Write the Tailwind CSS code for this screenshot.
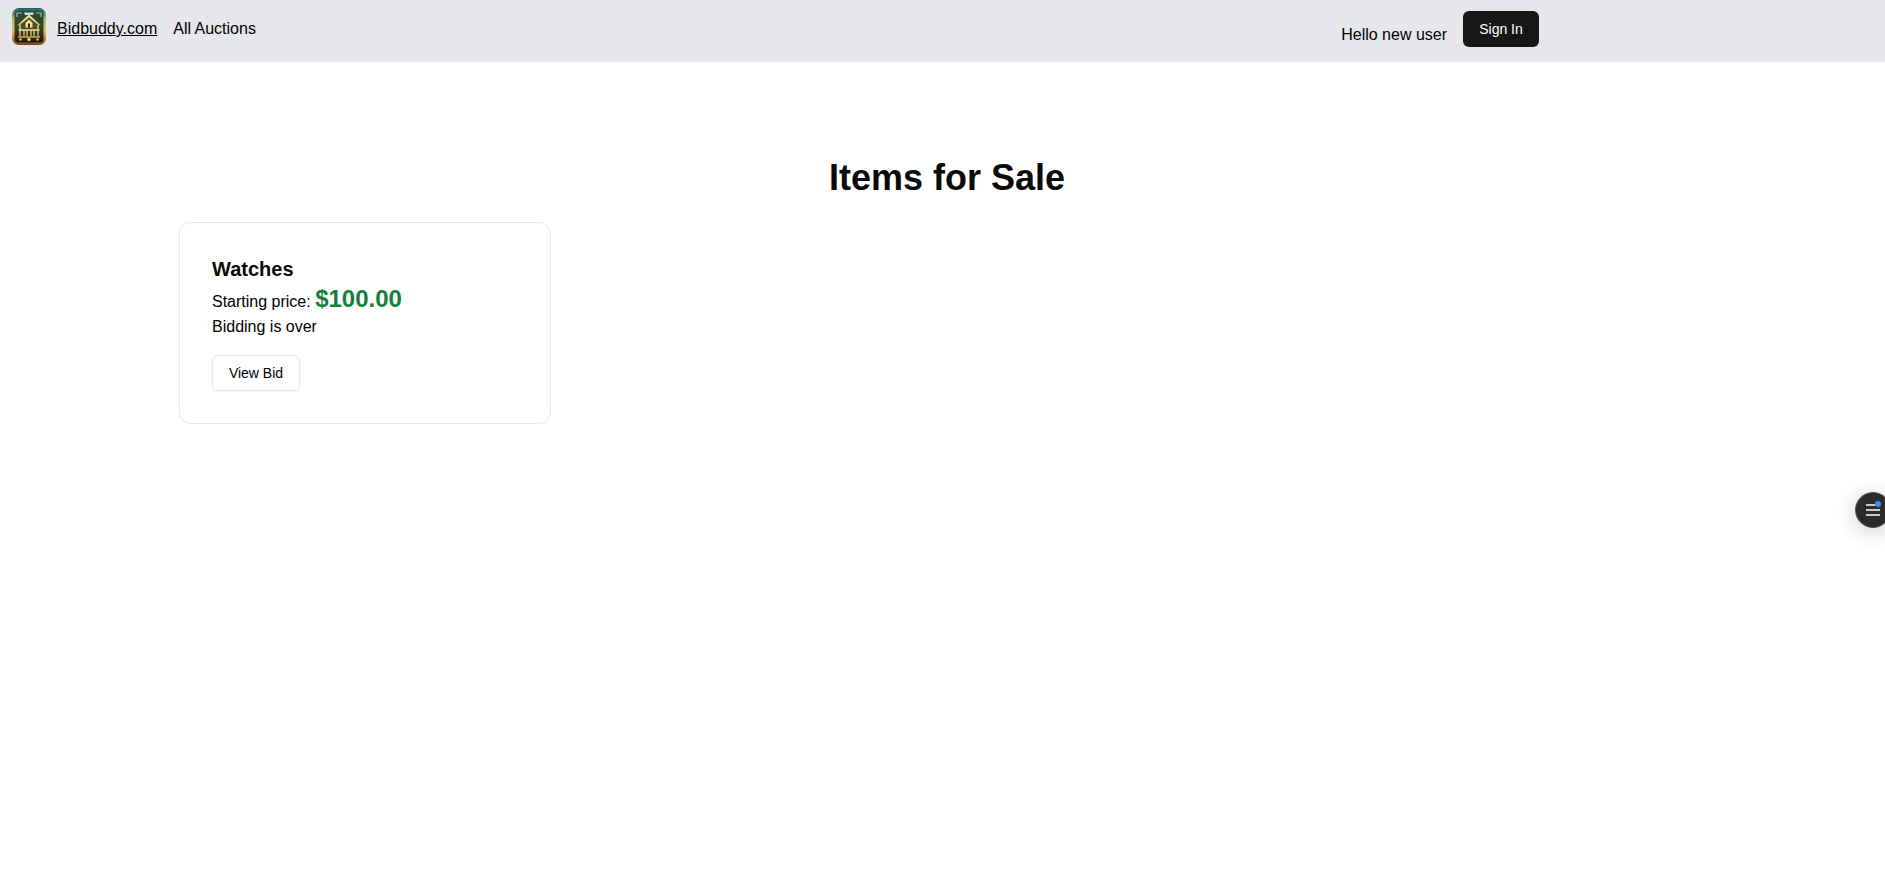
<!DOCTYPE html>
<html lang="en">
<head>
    <meta charset="UTF-8">
    <meta name="viewport" content="width=device-width, initial-scale=1.0">
    <title>Bidbuddy.com</title>
    <script src="https://cdn.jsdelivr.net/npm/@tailwindcss/browser@4"></script>
</head>
<body class="bg-white text-[#0a0a0a] font-['Liberation_Sans',Arial,sans-serif] min-h-screen overflow-hidden">

    <!-- Header -->
    <header class="bg-gray-200 h-[62px] flex items-start pl-3 pr-[346px] justify-between">
        <div class="flex items-start gap-4 pt-2 text-black">
            <div class="flex items-start gap-[11px]">
                <svg width="34" height="37" viewBox="0 0 34 37" class="block">
                    <defs>
                        <linearGradient id="logoBg" x1="0" y1="0" x2="0" y2="1">
                            <stop offset="0" stop-color="#1d5f68"/>
                            <stop offset="0.3" stop-color="#a9c07a"/>
                            <stop offset="0.65" stop-color="#e6bc58"/>
                            <stop offset="1" stop-color="#7c3f16"/>
                        </linearGradient>
                        <linearGradient id="logoInner" x1="0" y1="0" x2="0" y2="1">
                            <stop offset="0" stop-color="#2c4a40"/>
                            <stop offset="0.55" stop-color="#3c4424"/>
                            <stop offset="1" stop-color="#1c1508"/>
                        </linearGradient>
                        <linearGradient id="logoGold" x1="0" y1="0" x2="0" y2="1">
                            <stop offset="0" stop-color="#cfe6c8"/>
                            <stop offset="0.5" stop-color="#f2e08e"/>
                            <stop offset="1" stop-color="#d8a23e"/>
                        </linearGradient>
                    </defs>
                    <rect x="0" y="0" width="34" height="37" rx="7" fill="url(#logoBg)"/>
                    <rect x="2.5" y="2.5" width="29" height="32" rx="4" fill="url(#logoInner)"/>
                    <path d="M5 9 V5 H10 M29 9 V5 H24" stroke="#9fc0a0" stroke-width="1.2" fill="none"/>
                    <path d="M12 4.5 H22 L21 7 H13 Z" fill="#bfe0dc"/>
                    <path d="M17 6.5 L28.5 17 L26 17.5 L17 9.5 L8 17.5 L5.5 17 Z" fill="url(#logoGold)"/>
                    <path d="M8 17 L17 9.5 L26 17 V22 H8 Z" fill="#4a4c24"/>
                    <path d="M17 11.5 L20.5 15 V19.5 H13.5 V15 Z" fill="#f2e494"/>
                    <rect x="16" y="15.5" width="2" height="4" fill="#24240f"/>
                    <path d="M6.5 22 H27.5 M8 17 V29 M26 17 V29 M12 22 V29 M15 22 V29 M19 22 V29 M22 22 V29 M6 29 H28" stroke="url(#logoGold)" stroke-width="1.3" fill="none"/>
                    <circle cx="8.5" cy="31.5" r="1.3" fill="#e8b850"/>
                    <circle cx="17" cy="31.5" r="1.7" fill="#d8d4b0"/>
                    <circle cx="25.5" cy="31.5" r="1.3" fill="#e8b850"/>
                </svg>
                <a href="#" class="underline mt-[9px]">Bidbuddy.com</a>
            </div>
            <a href="#" class="mt-[9px]">All Auctions</a>
        </div>
        <div class="flex items-start gap-4 pt-[11px]">
            <span class="pt-3 text-black">Hello new user</span>
            <button class="h-9 w-[76px] rounded-md bg-[#171717] text-white text-sm font-medium">Sign In</button>
        </div>
    </header>

    <!-- Items -->
    <main class="ml-[179px] w-[1536px]">
        <h1 class="mt-[96px] text-center text-4xl font-bold leading-10">Items for Sale</h1>
        <div class="mt-6 grid grid-cols-4 gap-4">
            <div class="border border-gray-200 rounded-xl p-8 h-[202px]">
                <h2 class="text-xl font-bold leading-7">Watches</h2>
                <p class="text-black">Starting price: <span class="text-2xl font-bold text-[#15803d]">$100.00</span></p>
                <p class="text-black">Bidding is over</p>
                <button class="mt-4 h-9 w-[88px] rounded-md border border-gray-200 bg-white text-sm text-black shadow-xs">View Bid</button>
            </div>
        </div>
    </main>

    <!-- Floating menu button -->
    <div class="fixed right-[-6px] top-[492px] w-9 h-9 rounded-full bg-[#2b2b2b] border border-[#555] shadow-[0_4px_24px_rgba(0,0,0,0.2)] flex items-center justify-center">
        <svg width="20" height="18" viewBox="0 0 20 18" class="block">
            <path d="M3 4 H12 M3 9 H17 M3 14 H17" stroke="#fff" stroke-width="1.5" fill="none"/>
            <circle cx="15" cy="3" r="3" fill="#3b8df2"/>
        </svg>
    </div>
</body>
</html>
